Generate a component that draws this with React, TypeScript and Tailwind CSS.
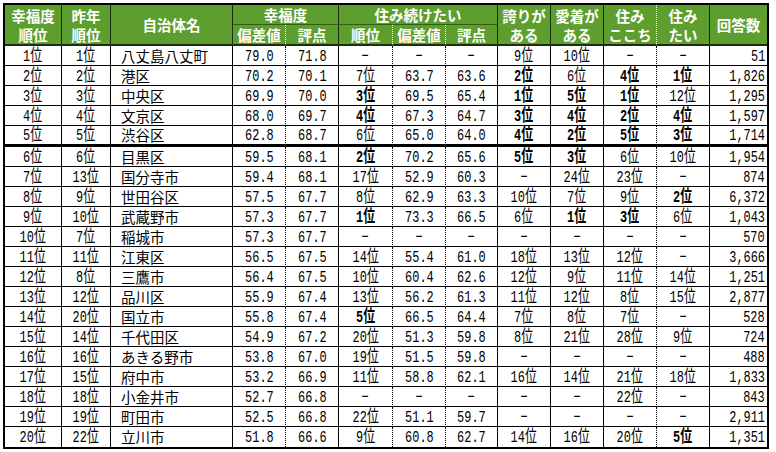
import React from 'react';

type Row = {
  rank: string;
  prev: string;
  name: string;
  hDev: string;
  hScore: string;
  lRank: string;
  lDev: string;
  lScore: string;
  pride: string;
  attach: string;
  comfort: string;
  want: string;
  count: string;
};

const D = '−';

const raw: string[][] = [
  ['1', '1', '八丈島八丈町', '79.0', '71.8', D, D, D, '9', '10', D, D, '51'],
  ['2', '2', '港区', '70.2', '70.1', '7', '63.7', '63.6', '2', '6', '4', '1', '1,826'],
  ['3', '3', '中央区', '69.9', '70.0', '3', '69.5', '65.4', '1', '5', '1', '12', '1,295'],
  ['4', '4', '文京区', '68.0', '69.7', '4', '67.3', '64.7', '3', '4', '2', '4', '1,597'],
  ['5', '5', '渋谷区', '62.8', '68.7', '6', '65.0', '64.0', '4', '2', '5', '3', '1,714'],
  ['6', '6', '目黒区', '59.5', '68.1', '2', '70.2', '65.6', '5', '3', '6', '10', '1,954'],
  ['7', '13', '国分寺市', '59.4', '68.1', '17', '52.9', '60.3', D, '24', '23', D, '874'],
  ['8', '9', '世田谷区', '57.5', '67.7', '8', '62.9', '63.3', '10', '7', '9', '2', '6,372'],
  ['9', '10', '武蔵野市', '57.3', '67.7', '1', '73.3', '66.5', '6', '1', '3', '6', '1,043'],
  ['10', '7', '稲城市', '57.3', '67.7', D, D, D, D, D, D, D, '570'],
  ['11', '11', '江東区', '56.5', '67.5', '14', '55.4', '61.0', '18', '13', '12', D, '3,666'],
  ['12', '8', '三鷹市', '56.4', '67.5', '10', '60.4', '62.6', '12', '9', '11', '14', '1,251'],
  ['13', '12', '品川区', '55.9', '67.4', '13', '56.2', '61.3', '11', '12', '8', '15', '2,877'],
  ['14', '20', '国立市', '55.8', '67.4', '5', '66.5', '64.4', '7', '8', '7', D, '528'],
  ['15', '14', '千代田区', '54.9', '67.2', '20', '51.3', '59.8', '8', '21', '28', '9', '724'],
  ['16', '16', 'あきる野市', '53.8', '67.0', '19', '51.5', '59.8', D, D, D, D, '488'],
  ['17', '15', '府中市', '53.2', '66.9', '11', '58.8', '62.1', '16', '14', '21', '18', '1,833'],
  ['18', '18', '小金井市', '52.7', '66.8', D, D, D, D, D, '22', D, '843'],
  ['19', '19', '町田市', '52.5', '66.8', '22', '51.1', '59.7', D, D, D, D, '2,911'],
  ['20', '22', '立川市', '51.8', '66.6', '9', '60.8', '62.7', '14', '16', '20', '5', '1,351'],
];

const rows: Row[] = raw.map((r) => ({
  rank: r[0],
  prev: r[1],
  name: r[2],
  hDev: r[3],
  hScore: r[4],
  lRank: r[5],
  lDev: r[6],
  lScore: r[7],
  pride: r[8],
  attach: r[9],
  comfort: r[10],
  want: r[11],
  count: r[12],
}));

const numFont = "font-['Liberation_Mono','Noto_Sans_CJK_JP',monospace]";

function Num({ v, bold, origin = 'origin-center' }: { v: string; bold?: boolean; origin?: string }) {
  return (
    <span
      className={`${numFont} inline-block align-top h-[18px] leading-[18px] text-[17px] scale-x-[0.7] translate-y-[1px] ${origin} ${bold ? 'font-bold' : 'font-normal'}`}
    >
      {v}
    </span>
  );
}

// 順位セル: 5位以内は太字
function Rank({ v, top }: { v: string; top?: boolean }) {
  if (v === D) return <Num v={D} />;
  const n = parseInt(v, 10);
  return <Num v={`${v}位`} bold={top && n <= 5} />;
}

const solid = 'border-r border-r-black';
const dotted = 'border-r border-r-black [border-right-style:dotted]';
const hd = 'border-[#1c2e10]';
const hdDot = 'border-r border-r-white [border-right-style:dotted]';

export default function App() {
  return (
    <div className="bg-white w-[776px] h-[452px] pl-[3px] pt-[3px] font-['Noto_Sans_CJK_JP',sans-serif] text-black overflow-hidden">
      <table className="table-fixed border-separate border-spacing-0 border-2 border-black w-[766px]">
        <colgroup>
          <col className="w-[57px]" />
          <col className="w-[49px]" />
          <col className="w-[122px]" />
          <col className="w-[53px]" />
          <col className="w-[53px]" />
          <col className="w-[54px]" />
          <col className="w-[53px]" />
          <col className="w-[52px]" />
          <col className="w-[53px]" />
          <col className="w-[53px]" />
          <col className="w-[53px]" />
          <col className="w-[53px]" />
          <col className="w-[57px]" />
        </colgroup>
        <thead className="bg-[#5e9e2e] text-white text-[14.5px] leading-[19px]">
          <tr>
            <th rowSpan={2} className={`border-r border-b-2 ${hd} p-0 font-bold`}>幸福度<br />順位</th>
            <th rowSpan={2} className={`border-r border-b-2 ${hd} p-0 font-bold`}>昨年<br />順位</th>
            <th rowSpan={2} className={`border-r border-b-2 ${hd} p-0 font-bold`}>自治体名</th>
            <th colSpan={2} className="h-[19px] border-r border-b border-r-[#1c2e10] border-b-[#2f5f14] p-0 font-bold">幸福度</th>
            <th colSpan={3} className="h-[19px] border-r border-b border-r-[#1c2e10] border-b-[#2f5f14] p-0 font-bold">住み続けたい</th>
            <th rowSpan={2} className={`border-r border-b-2 ${hd} p-0 font-bold`}>誇りが<br />ある</th>
            <th rowSpan={2} className={`border-r border-b-2 ${hd} p-0 font-bold`}>愛着が<br />ある</th>
            <th rowSpan={2} className={`${hdDot} border-b-2 border-b-[#1c2e10] p-0 font-bold`}>住み<br />ここち</th>
            <th rowSpan={2} className={`border-r border-b-2 ${hd} p-0 font-bold`}>住み<br />たい</th>
            <th rowSpan={2} className={`border-b-2 ${hd} p-0 font-bold`}>回答数</th>
          </tr>
          <tr>
            <th className={`h-[20px] ${hdDot} border-b-2 border-b-[#1c2e10] p-0 font-bold`}>偏差値</th>
            <th className={`h-[20px] border-r border-b-2 ${hd} p-0 font-bold`}>評点</th>
            <th className={`h-[20px] ${hdDot} border-b-2 border-b-[#1c2e10] p-0 font-bold`}>順位</th>
            <th className={`h-[20px] ${hdDot} border-b-2 border-b-[#1c2e10] p-0 font-bold`}>偏差値</th>
            <th className={`h-[20px] border-r border-b-2 ${hd} p-0 font-bold`}>評点</th>
          </tr>
        </thead>
        <tbody>
          {rows.map((r, i) => {
            const last = i === rows.length - 1;
            const b = last ? '' : i === 4 ? 'border-b-[3px] border-b-black' : 'border-b border-b-black';
            const td = `p-0 h-[20px] leading-[18px] whitespace-nowrap ${b}`;
            return (
              <tr key={r.name}>
                <td className={`${td} ${solid} text-center`}><Rank v={r.rank} /></td>
                <td className={`${td} ${solid} text-center`}><Rank v={r.prev} /></td>
                <td className={`${td} ${solid} pl-[10px] text-left text-[14.5px]`}>{r.name}</td>
                <td className={`${td} ${dotted} text-center`}><Num v={r.hDev} /></td>
                <td className={`${td} ${solid} text-center`}><Num v={r.hScore} /></td>
                <td className={`${td} ${dotted} text-center`}><Rank v={r.lRank} top /></td>
                <td className={`${td} ${dotted} text-center`}><Num v={r.lDev} /></td>
                <td className={`${td} ${solid} text-center`}><Num v={r.lScore} /></td>
                <td className={`${td} ${solid} text-center`}><Rank v={r.pride} top /></td>
                <td className={`${td} ${solid} text-center`}><Rank v={r.attach} top /></td>
                <td className={`${td} ${dotted} text-center`}><Rank v={r.comfort} top /></td>
                <td className={`${td} ${solid} text-center`}><Rank v={r.want} top /></td>
                <td className={`${td} text-right pr-[2px]`}><Num v={r.count} origin="origin-right" /></td>
              </tr>
            );
          })}
        </tbody>
      </table>
    </div>
  );
}
